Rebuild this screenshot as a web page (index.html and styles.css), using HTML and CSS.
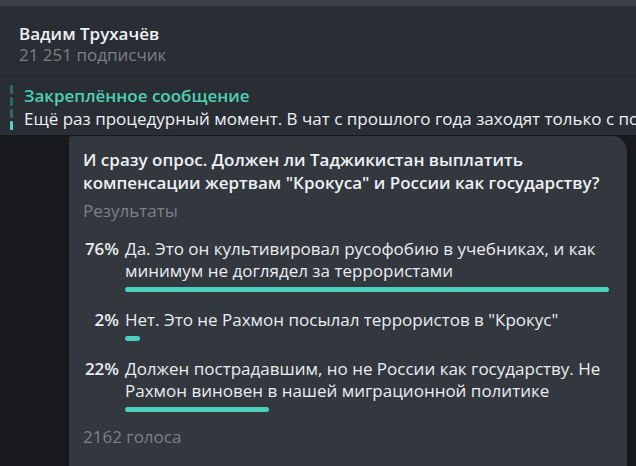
FILE: index.html
```html
<!DOCTYPE html>
<html lang="ru">
<head>
<meta charset="utf-8">
<link rel="stylesheet" href="styles.css">
</head>
<body>
<div class="topstrip"></div>
<header class="header">
  <div class="name">Вадим Трухачёв</div>
  <div class="subs">21 251 подписчик</div>
</header>
<section class="pinned">
  <div class="pinbar">
    <span class="seg"></span><span class="seg"></span><span class="seg"></span><span class="seg on"></span>
  </div>
  <div class="pintext">
    <div class="pintitle">Закреплённое сообщение</div>
    <div class="pinmsg">Ещё раз процедурный момент. В чат с прошлого года заходят только с подписки на канал</div>
  </div>
</section>
<main class="chat">
  <div class="bubble">
    <div class="question">И сразу опрос. Должен ли Таджикистан выплатить компенсации жертвам "Крокуса" и России как государству?</div>
    <div class="results">Результаты</div>
    <div class="option">
      <div class="pct">76%</div>
      <div class="body">
        <div class="otext">Да. Это он культивировал русофобию в учебниках, и как минимум не доглядел за террористами</div>
        <div class="bar" style="width:484px"></div>
      </div>
    </div>
    <div class="option">
      <div class="pct">2%</div>
      <div class="body">
        <div class="otext">Нет. Это не Рахмон посылал террористов в "Крокус"</div>
        <div class="bar" style="width:15px"></div>
      </div>
    </div>
    <div class="option">
      <div class="pct">22%</div>
      <div class="body">
        <div class="otext">Должен пострадавшим, но не России как государству. Не Рахмон виновен в нашей миграционной политике</div>
        <div class="bar" style="width:144px"></div>
      </div>
    </div>
    <div class="votes">2162 голоса</div>
  </div>
</main>
</body>
</html>
```

FILE: styles.css
```css
* { box-sizing: border-box; }
html, body { margin: 0; padding: 0; }
body {
  width: 636px;
  height: 466px;
  overflow: hidden;
  background: #17191c;
  font-family: "Open Sans", "Noto Sans", sans-serif;
  font-size: 17px;
  color: #e9edf1;
}
.topstrip { height: 6px; background: #3b4048; }
.header {
  height: 71px;
  background: #292d34;
  border-bottom: 1px solid #22252a;
  padding: 17px 0 0 19px;
}
.name { font-weight: 600; line-height: 22px; color: #eef1f4; }
.subs { color: #7a8087; line-height: 20px; }
.pinned {
  height: 58px;
  background: #292d34;
  display: flex;
  padding: 7px 0 0 10px;
  overflow: hidden;
}
.pinbar {
  width: 3px;
  display: flex;
  flex-direction: column;
  gap: 3px;
  padding-top: 1px;
  margin-right: 11px;
}
.seg { display: block; height: 9px; width: 3px; border-radius: 1px; background: #2f6660; }
.seg.on { background: #4fd6c2; }
.pintext { white-space: nowrap; padding-top: 1px; }
.pintitle { color: #4fd1b4; font-weight: 600; line-height: 22px; }
.pinmsg { line-height: 23px; color: #eef1f4; }
.chat { padding: 0 0 0 69px; }
.bubble {
  width: 558px;
  height: 400px;
  background: #33373e;
  border-radius: 3px 15px 0 0;
  margin-top: 1px;
  padding: 12px 0 0 14px;
}
.question { font-weight: 600; line-height: 23px; width: 530px; color: #eef1f4; }
.results { color: #7a8087; line-height: 23px; margin-top: 5px; }
.option { display: flex; margin-top: 16px; }
.option + .option { margin-top: 17px; }
.pct { width: 36px; flex: none; text-align: right; font-weight: 600; line-height: 22px; margin-right: 6px; }
.body { width: 484px; }
.otext { line-height: 22px; }
.bar { height: 5px; border-radius: 3px; background: #4ecfc0; margin-top: 5px; }
.votes { color: #7a8087; line-height: 22px; margin-top: 14px; }
```
